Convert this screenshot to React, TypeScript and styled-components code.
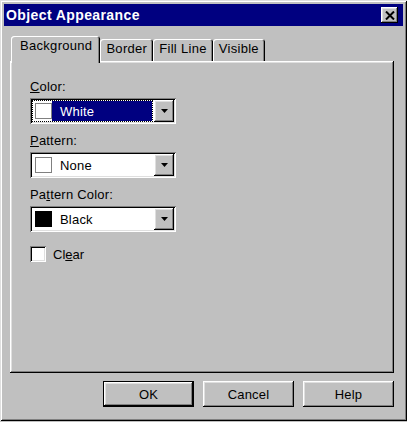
import React from 'react';
import styled, { createGlobalStyle } from 'styled-components';

const GlobalStyle = createGlobalStyle`
  html, body { margin: 0; padding: 0; background: #c0c0c0; }
  body { font-family: "Liberation Sans", Arial, sans-serif; font-size: 13px; color: #000; }
`;

const raised = `
  box-shadow: inset -1px -1px #000, inset 1px 1px #fff, inset -2px -2px #808080, inset 2px 2px #dfdfdf;
`;

const sunken = `
  box-shadow: inset 1px 1px #808080, inset -1px -1px #fff, inset 2px 2px #000, inset -2px -2px #dfdfdf;
`;

const Window = styled.div`
  box-sizing: border-box;
  width: 407px;
  height: 421px;
  padding: 4px;
  background: #c0c0c0;
  display: flex;
  flex-direction: column;
  box-shadow: inset 1px 1px #dfdfdf, inset -1px -1px #000, inset 2px 2px #fff, inset -2px -2px #808080;
`;

const TitleBar = styled.div`
  height: 22px;
  background: #000080;
  color: #fff;
  display: flex;
  align-items: center;
  justify-content: space-between;
  padding: 0 5px 0 2px;
`;

const Title = styled.span`
  font-weight: bold;
  font-size: 14px;
  letter-spacing: 0.4px;
`;

const CloseButton = styled.div`
  width: 17px;
  height: 16px;
  background: #c0c0c0;
  display: flex;
  align-items: center;
  justify-content: center;
  ${raised}
`;

const TabStrip = styled.div`
  display: flex;
  align-items: flex-end;
  height: 25px;
  margin-top: 10px;
  padding-left: 7px;
`;

const Tab = styled.div<{ $active?: boolean }>`
  box-sizing: border-box;
  position: relative;
  z-index: ${(p) => (p.$active ? 1 : 0)};
  height: ${(p) => (p.$active ? 27 : 22)}px;
  margin-bottom: ${(p) => (p.$active ? -2 : 0)}px;
  padding: ${(p) => (p.$active ? '2px 8px 0 9px' : '2px 6px 0 6px')};
  line-height: 16px;
  letter-spacing: 0.3px;
  background: #c0c0c0;
  border-radius: 3px 3px 0 0;
  box-shadow: inset 1px 1px #fff, inset -1px 0 #000, inset -2px 0 #808080;
`;

const Panel = styled.div`
  box-sizing: border-box;
  height: 312px;
  margin: 0 9px 0 6px;
  padding: 18px 20px 0;
  display: flex;
  flex-direction: column;
  align-items: flex-start;
  ${raised}
`;

const Label = styled.div`
  line-height: 16px;
  margin-bottom: 3px;
  letter-spacing: 0.2px;
`;

const Key = styled.span`
  text-decoration: underline;
`;

const Combo = styled.div`
  box-sizing: border-box;
  width: 146px;
  height: 26px;
  padding: 2px;
  margin-bottom: 9px;
  background: #fff;
  display: flex;
  ${sunken}
`;

const Field = styled.div<{ $focused?: boolean }>`
  flex: 1;
  display: flex;
  margin: 1px 2px 1px 1px;
  outline: ${(p) => (p.$focused ? '1px dotted #000' : 'none')};
`;

const SwatchCell = styled.div`
  display: flex;
  align-items: center;
  padding: 0 0 0 2px;
  background: #fff;
`;

const Swatch = styled.div<{ $color: string }>`
  box-sizing: border-box;
  width: 17px;
  height: 16px;
  background: ${(p) => p.$color};
  border: 1px solid ${(p) => (p.$color === '#fff' ? '#808080' : '#000')};
`;

const Value = styled.div<{ $focused?: boolean }>`
  flex: 1;
  display: flex;
  align-items: center;
  padding-left: 8px;
  letter-spacing: 0.2px;
  background: ${(p) => (p.$focused ? '#000080' : '#fff')};
  color: ${(p) => (p.$focused ? '#fff' : '#000')};
`;

const DropButton = styled.div`
  width: 20px;
  background: #c0c0c0;
  display: flex;
  align-items: center;
  justify-content: center;
  ${raised}
`;

const CheckRow = styled.div`
  display: flex;
  align-items: center;
  gap: 7px;
  margin-top: 5px;
`;

const CheckBox = styled.div`
  width: 16px;
  height: 16px;
  background: #fff;
  ${sunken}
`;

const ButtonRow = styled.div`
  display: flex;
  justify-content: flex-end;
  gap: 9px;
  margin-top: 8px;
  padding-right: 9px;
`;

const Button = styled.div<{ $default?: boolean }>`
  box-sizing: border-box;
  width: 91px;
  height: 26px;
  display: flex;
  align-items: center;
  justify-content: center;
  letter-spacing: 0.2px;
  background: #c0c0c0;
  box-shadow: ${(p) =>
    p.$default
      ? 'inset 0 0 0 1px #000, inset -2px -2px #000, inset 2px 2px #fff, inset -3px -3px #808080, inset 3px 3px #dfdfdf'
      : 'inset -1px -1px #000, inset 1px 1px #fff, inset -2px -2px #808080, inset 2px 2px #dfdfdf'};
`;

const Arrow = () => (
  <svg width="7" height="4" viewBox="0 0 7 4">
    <path d="M0 0H7L3.5 4Z" fill="#000" />
  </svg>
);

const CloseIcon = () => (
  <svg width="10" height="9" viewBox="0 0 10 9">
    <path d="M1 0.5L9 8.5M9 0.5L1 8.5" stroke="#000" strokeWidth="2" />
  </svg>
);

const ColorCombo: React.FC<{ color: string; name: string; focused?: boolean }> = ({
  color,
  name,
  focused,
}) => (
  <Combo>
    <Field $focused={focused}>
      <SwatchCell>
        <Swatch $color={color} />
      </SwatchCell>
      <Value $focused={focused}>{name}</Value>
    </Field>
    <DropButton>
      <Arrow />
    </DropButton>
  </Combo>
);

const App: React.FC = () => {
  const tabs = ['Background', 'Border', 'Fill Line', 'Visible'];
  return (
    <>
      <GlobalStyle />
      <Window>
        <TitleBar>
          <Title>Object Appearance</Title>
          <CloseButton>
            <CloseIcon />
          </CloseButton>
        </TitleBar>
        <TabStrip>
          {tabs.map((t, i) => (
            <Tab key={t} $active={i === 0}>
              {t}
            </Tab>
          ))}
        </TabStrip>
        <Panel>
          <Label>
            <Key>C</Key>olor:
          </Label>
          <ColorCombo color="#fff" name="White" focused />
          <Label>
            <Key>P</Key>attern:
          </Label>
          <ColorCombo color="#fff" name="None" />
          <Label>
            Pa<Key>t</Key>tern Color:
          </Label>
          <ColorCombo color="#000" name="Black" />
          <CheckRow>
            <CheckBox />
            <span>
              Cl<Key>e</Key>ar
            </span>
          </CheckRow>
        </Panel>
        <ButtonRow>
          <Button $default>OK</Button>
          <Button>Cancel</Button>
          <Button>Help</Button>
        </ButtonRow>
      </Window>
    </>
  );
};

export default App;
